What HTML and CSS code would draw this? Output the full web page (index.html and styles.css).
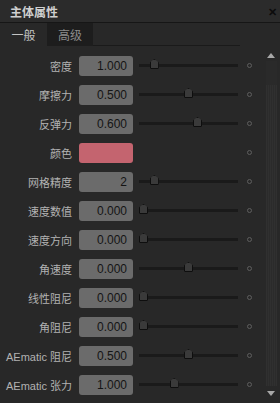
FILE: index.html
```html
<!DOCTYPE html>
<html>
<head>
  <title>主体属性</title>
  <link rel="stylesheet" href="styles.css">
</head>
<body>
  <div class="panel">
    <div class="titlebar">
      <span class="title">主体属性</span>
      <span class="close">✕</span>
    </div>

    <div class="tabs">
      <div class="tab active">一般</div>
      <div class="tab">高级</div>
      <div class="tab-rest"></div>
    </div>

    <div class="body">
      <div class="rows">
        <div class="row">
          <label>密度</label>
          <div class="field">1.000</div>
          <div class="slider"><div class="thumb" style="--p: 0.12"></div></div>
          <span class="dot"></span>
        </div>
        <div class="row">
          <label>摩擦力</label>
          <div class="field">0.500</div>
          <div class="slider"><div class="thumb" style="--p: 0.5"></div></div>
          <span class="dot"></span>
        </div>
        <div class="row">
          <label>反弹力</label>
          <div class="field">0.600</div>
          <div class="slider"><div class="thumb" style="--p: 0.6"></div></div>
          <span class="dot"></span>
        </div>
        <div class="row">
          <label>颜色</label>
          <div class="field swatch"></div>
          <div class="slider empty"></div>
          <span class="dot"></span>
        </div>
        <div class="row">
          <label>网格精度</label>
          <div class="field">2</div>
          <div class="slider"><div class="thumb" style="--p: 0.12"></div></div>
          <span class="dot"></span>
        </div>
        <div class="row">
          <label>速度数值</label>
          <div class="field">0.000</div>
          <div class="slider"><div class="thumb" style="--p: 0"></div></div>
          <span class="dot"></span>
        </div>
        <div class="row">
          <label>速度方向</label>
          <div class="field">0.000</div>
          <div class="slider"><div class="thumb" style="--p: 0"></div></div>
          <span class="dot"></span>
        </div>
        <div class="row">
          <label>角速度</label>
          <div class="field">0.000</div>
          <div class="slider"><div class="thumb" style="--p: 0.5"></div></div>
          <span class="dot"></span>
        </div>
        <div class="row">
          <label>线性阻尼</label>
          <div class="field">0.000</div>
          <div class="slider"><div class="thumb" style="--p: 0"></div></div>
          <span class="dot"></span>
        </div>
        <div class="row">
          <label>角阻尼</label>
          <div class="field">0.000</div>
          <div class="slider"><div class="thumb" style="--p: 0"></div></div>
          <span class="dot"></span>
        </div>
        <div class="row">
          <label>AEmatic 阻尼</label>
          <div class="field">0.500</div>
          <div class="slider"><div class="thumb" style="--p: 0.5"></div></div>
          <span class="dot"></span>
        </div>
        <div class="row">
          <label>AEmatic 张力</label>
          <div class="field">1.000</div>
          <div class="slider"><div class="thumb" style="--p: 0.34"></div></div>
          <span class="dot"></span>
        </div>
      </div>

      <div class="scrollbar">
        <span class="arrow up"></span>
        <div class="track"><div class="track-top"></div></div>
        <span class="arrow down"></span>
      </div>
    </div>
  </div>
</body>
</html>
```

FILE: styles.css
```css
body {
  margin: 0;
  background-color: #282828;
  font-family: "Noto Sans CJK SC", "Liberation Sans", sans-serif;
}

.panel {
  width: 280px;
  height: 403px;
  overflow: hidden;
  background-color: #282828;
}

.titlebar {
  height: 22px;
  display: flex;
  align-items: center;
  justify-content: space-between;
  padding: 0 3px 0 10px;
  background-color: #2b2b2b;
  border-bottom: 1px solid #161616;
}

.title {
  color: #cfcfcf;
  font-size: 12px;
  font-weight: bold;
}

.close {
  color: #0c0c0c;
  font-size: 11px;
  font-weight: bold;
}

.tabs {
  display: flex;
  height: 23px;
}

.tab {
  width: 46px;
  display: flex;
  align-items: center;
  justify-content: center;
  font-size: 12px;
  color: #8c8c8c;
  background-color: #1d1d1d;
}

.tab.active {
  width: 47px;
  color: #c4c4c4;
  background-color: #282828;
}

.tab-rest {
  width: 147px;
  border-bottom: 1px solid #1a1a1a;
}

.body {
  display: flex;
  padding-top: 5px;
}

.rows {
  width: 265px;
}

.row {
  height: 29px;
  display: flex;
  align-items: center;
}

.row label {
  width: 72px;
  text-align: right;
  font-family: "Liberation Sans", "Noto Sans CJK SC", sans-serif;
  font-size: 11px;
  color: #b2b2b2;
  white-space: nowrap;
}

.field {
  width: 54px;
  height: 20px;
  margin-left: 7px;
  box-sizing: border-box;
  padding-right: 6px;
  border-radius: 3px;
  background-color: #6b6b6b;
  color: #141414;
  font-family: "Liberation Sans", sans-serif;
  font-size: 12px;
  line-height: 20px;
  text-align: right;
}

.field.swatch {
  background-color: #c4646f;
}

.slider {
  position: relative;
  width: 99px;
  height: 3px;
  margin-left: 6px;
  background-color: #1a1a1a;
}

.slider.empty {
  background: none;
}

.thumb {
  position: absolute;
  top: -5px;
  left: calc((100% - 9px) * var(--p));
  width: 9px;
  height: 10px;
  box-sizing: border-box;
  background-color: #3a3a3a;
  border: 1px solid #0e0e0e;
  border-radius: 1px;
  clip-path: polygon(50% 0, 100% 35%, 100% 100%, 0 100%, 0 35%);
}

.dot {
  width: 5px;
  height: 5px;
  margin-left: 9px;
  box-sizing: border-box;
  border-radius: 50%;
  border: 1px solid #5e5e5e;
}

.scrollbar {
  width: 12px;
  display: flex;
  flex-direction: column;
  align-items: center;
}

.arrow {
  width: 0;
  height: 0;
  border-left: 4px solid transparent;
  border-right: 4px solid transparent;
}

.arrow.up {
  margin-top: 2px;
  border-bottom: 5px solid #a8a8a8;
}

.arrow.down {
  margin-top: 5px;
  border-top: 5px solid #a8a8a8;
}

.track {
  width: 11px;
  height: 325px;
  margin-top: 3px;
  background-color: #2f2f2f;
  background-image: repeating-linear-gradient(90deg, #303030 0 1px, #2b2b2b 1px 2px);
}

.track-top {
  height: 24px;
  background-color: #2a2a2a;
}
```
